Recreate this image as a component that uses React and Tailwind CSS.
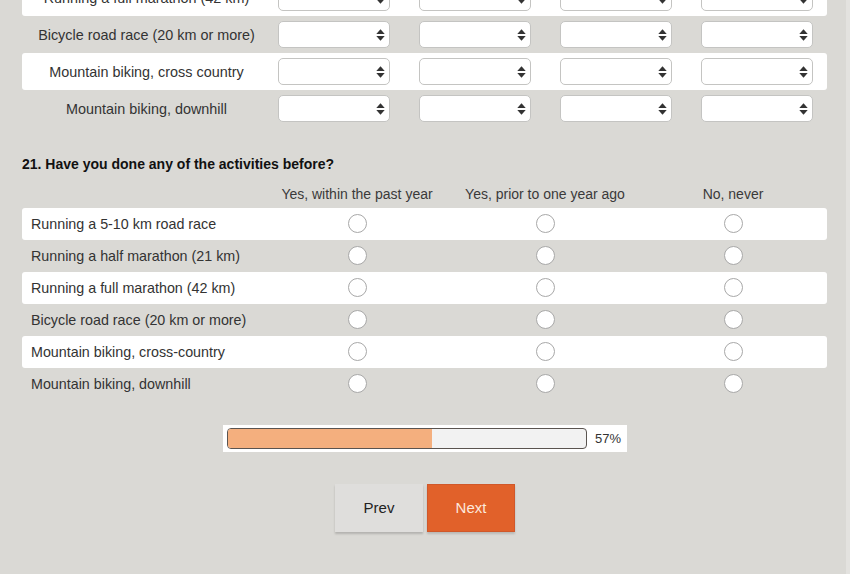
import React from "react";

const topRows = [
  "Running a full marathon (42 km)",
  "Bicycle road race (20 km or more)",
  "Mountain biking, cross country",
  "Mountain biking, downhill",
];

const radioRows = [
  "Running a 5-10 km road race",
  "Running a half marathon (21 km)",
  "Running a full marathon (42 km)",
  "Bicycle road race (20 km or more)",
  "Mountain biking, cross-country",
  "Mountain biking, downhill",
];

function SelectBox() {
  return (
    <div className="relative w-[112px] h-[27px] rounded-[5px] border border-[#c4c4c2] bg-white">
      <svg
        className="absolute right-[4px] top-[7px]"
        width="9"
        height="12"
        viewBox="0 0 9 12"
      >
        <path d="M4.5 0.3 L8.7 5 L0.3 5 Z" fill="#333" />
        <path d="M0.3 7 L8.7 7 L4.5 11.7 Z" fill="#333" />
      </svg>
    </div>
  );
}

function Radio() {
  return (
    <div className="w-[19px] h-[19px] rounded-full border border-[#a8a8a8] bg-white" />
  );
}

export default function App() {
  return (
    <div
      className="relative w-[850px] h-[574px] overflow-hidden bg-[#dad9d5] text-[#333]"
      style={{ fontFamily: '"Liberation Sans", Arial, sans-serif' }}
    >
      <div className="absolute right-0 top-0 w-[4px] h-full bg-[#e3e2df]" />
      <div className="ml-[22px] w-[805px] mt-[-21px]">
        {topRows.map((label, i) => (
          <div
            key={label}
            className={
              "flex items-center h-[37px] rounded-[3px] " +
              (i % 2 === 0 ? "bg-white" : "")
            }
          >
            <div className="w-[241px] pl-[8px] text-center text-[14.4px] leading-[18px]">
              {label}
            </div>
            {[0, 1, 2, 3].map((c) => (
              <div key={c} className="w-[141px] flex justify-center">
                <SelectBox />
              </div>
            ))}
          </div>
        ))}

        <div className="mt-[29px] h-[17px] text-[14px] leading-[17px] font-bold text-[#111]">
          21. Have you done any of the activities before?
        </div>

        <div className="mt-[7px] h-[28px] flex items-center text-[14px] leading-[17px] text-[#3a3a3a]">
          <div className="w-[241px]" />
          <div className="w-[188px] text-center">Yes, within the past year</div>
          <div className="w-[188px] text-center">Yes, prior to one year ago</div>
          <div className="w-[188px] text-center">No, never</div>
        </div>

        {radioRows.map((label, i) => (
          <div
            key={label}
            className={
              "flex items-center h-[32px] rounded-[3px] " +
              (i % 2 === 0 ? "bg-white" : "")
            }
          >
            <div className="w-[241px] pl-[9px] text-[14.3px] leading-[18px] -mt-[1px]">
              {label}
            </div>
            {[0, 1, 2].map((c) => (
              <div key={c} className="w-[188px] flex justify-center -mt-[1px]">
                <Radio />
              </div>
            ))}
          </div>
        ))}
      </div>

      <div className="mx-auto mt-[25px] w-[404px] h-[27px] bg-white flex items-center pl-[4px]">
        <div className="w-[360px] h-[21px] rounded-[4px] border border-[#5a5450] bg-[#f2f2f2] overflow-hidden">
          <div className="h-full bg-[#f4af7e]" style={{ width: "57%" }} />
        </div>
        <div className="ml-[8px] text-[13px] leading-[16px] text-[#333]">57%</div>
      </div>

      <div className="mt-[32px] flex justify-center gap-[4px]">
        <button className="w-[88px] h-[48px] bg-[#dfdedc] text-[15px] text-[#222] shadow-[0_2px_2px_rgba(0,0,0,0.18)]">
          Prev
        </button>
        <button className="w-[88px] h-[48px] bg-[#e1612a] border border-[#d0582a] text-[15px] text-[#fde8dc] shadow-[0_2px_2px_rgba(0,0,0,0.15)]">
          Next
        </button>
      </div>
    </div>
  );
}
